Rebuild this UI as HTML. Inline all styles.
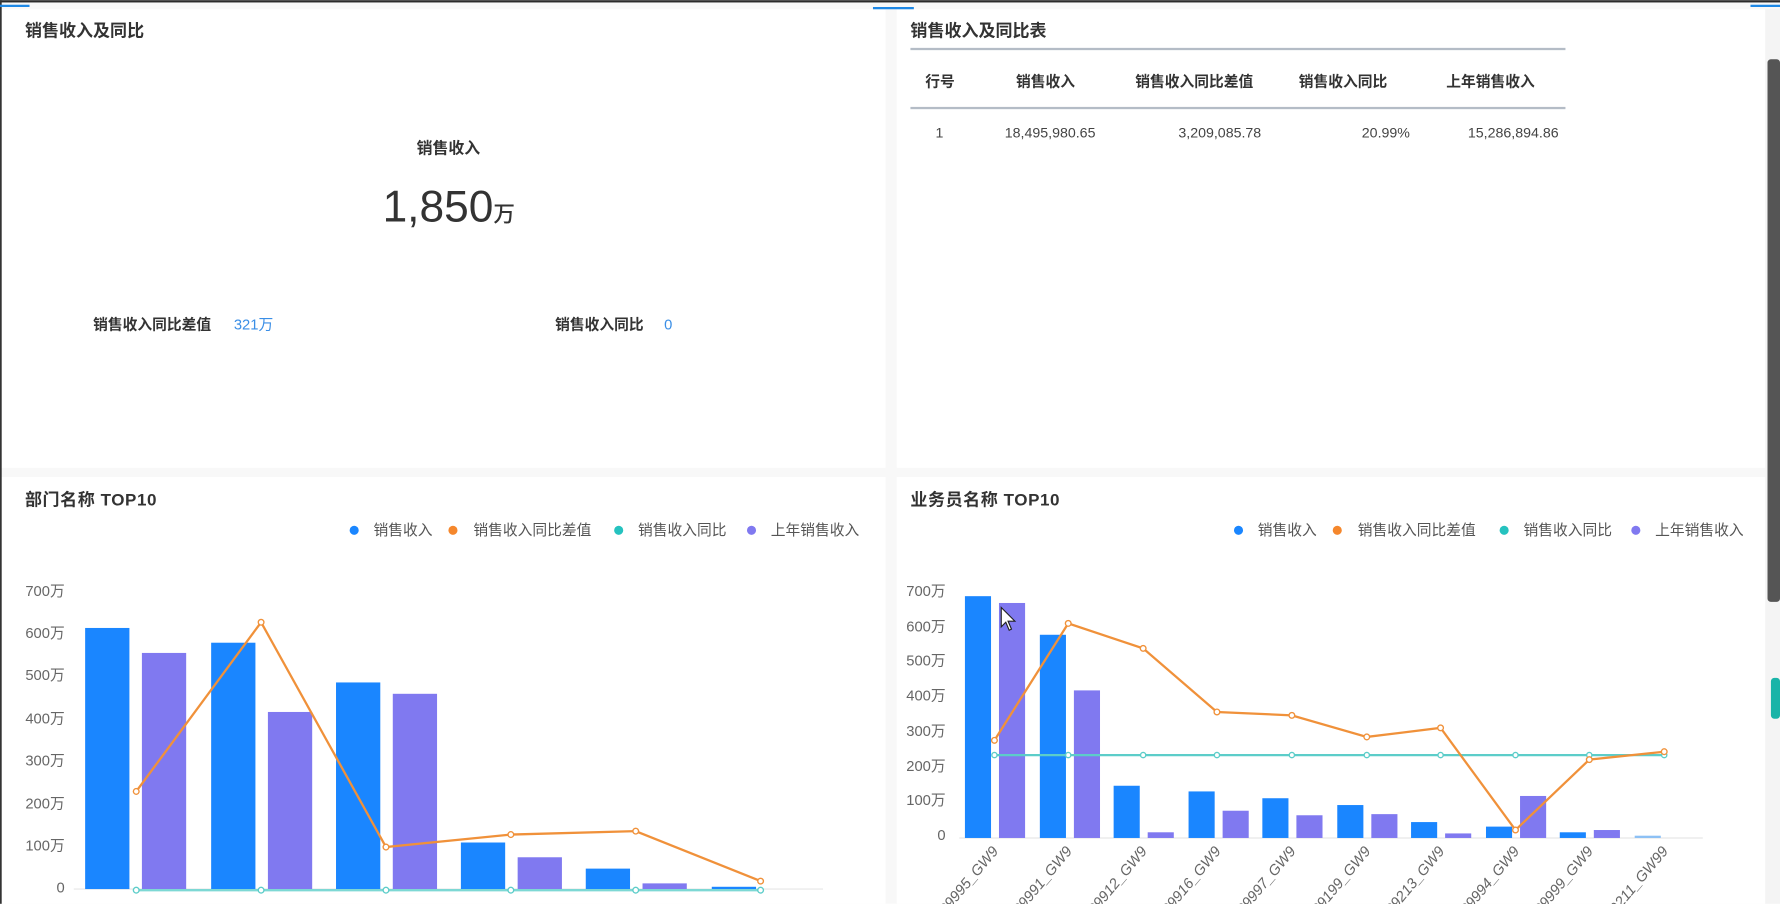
<!DOCTYPE html>
<html><head><meta charset="utf-8"><style>
html,body{margin:0;padding:0;background:#fff;overflow:hidden}
svg{display:block}
text{font-family:"Liberation Sans","Noto Sans CJK SC",sans-serif}
</style></head><body>
<svg width="1780" height="904" viewBox="0 0 1568 796" xmlns="http://www.w3.org/2000/svg">
<rect width="1568" height="796" fill="#f8f8f8"/>
<rect x="0" y="0" width="1568" height="2" fill="#2a2a2a"/>
<!-- panels -->
<rect x="1" y="8" width="779" height="404" fill="#fff"/>
<rect x="790" y="8" width="765" height="404" fill="#fff"/>
<rect x="1" y="420" width="779" height="376" fill="#fff"/>
<rect x="790" y="420" width="765" height="376" fill="#fff"/>
<rect x="0" y="0" width="1.5" height="796" fill="#333"/>
<rect x="0" y="4" width="26" height="2" fill="#1e88e5"/>
<rect x="769" y="6" width="36" height="2" fill="#1e88e5"/>
<rect x="1542" y="4" width="26" height="2" fill="#1e88e5"/>
<!-- scrollbar -->
<rect x="1555" y="8" width="13" height="788" fill="#f4f4f4"/>
<rect x="1557" y="52" width="11" height="478" rx="3" fill="#555"/>
<rect x="1560" y="597" width="8" height="36" rx="3" fill="#19b4a8"/>

<!-- Panel 1 -->
<text x="22" y="32" font-size="15" font-weight="bold" fill="#333">销售收入及同比</text>
<text x="395" y="135" font-size="14" font-weight="bold" fill="#333" text-anchor="middle">销售收入</text>
<text x="337" y="195" font-size="39" fill="#333" font-weight="500">1,850<tspan font-size="19">万</tspan></text>
<text x="82" y="290" font-size="13" font-weight="bold" fill="#333">销售收入同比差值</text>
<text x="206" y="290" font-size="13" fill="#3a8ee6">321万</text>
<text x="489" y="290" font-size="13" font-weight="bold" fill="#333">销售收入同比</text>
<text x="585" y="290" font-size="13" fill="#3a8ee6">0</text>

<!-- Panel 2 table -->
<text x="802" y="32" font-size="15" font-weight="bold" fill="#333">销售收入及同比表</text>
<rect x="802" y="42" width="577" height="2" fill="#b4bcc6"/>
<rect x="802" y="94" width="577" height="2" fill="#b4bcc6"/>
<g font-size="13" font-weight="bold" fill="#333" text-anchor="middle">
<text x="828" y="76">行号</text><text x="921" y="76">销售收入</text><text x="1052" y="76">销售收入同比差值</text><text x="1183" y="76">销售收入同比</text><text x="1313" y="76">上年销售收入</text>
</g>
<g font-size="12.5" fill="#444" text-anchor="end">
<text x="831" y="121">1</text><text x="965" y="121">18,495,980.65</text><text x="1111" y="121">3,209,085.78</text><text x="1242" y="121">20.99%</text><text x="1373" y="121">15,286,894.86</text>
</g>

<!-- Chart 3 -->
<text x="22" y="445" font-size="15" font-weight="bold" fill="#333" letter-spacing="0.5">部门名称 TOP10</text>
<g font-size="13" fill="#555">
<circle cx="312" cy="467" r="4" fill="#1a86ff"/><text x="329" y="471">销售收入</text>
<circle cx="399" cy="467" r="4" fill="#f5872c"/><text x="417" y="471">销售收入同比差值</text>
<circle cx="545" cy="467" r="4" fill="#25c2bf"/><text x="562" y="471">销售收入同比</text>
<circle cx="662" cy="467" r="4" fill="#8079f0"/><text x="679" y="471">上年销售收入</text>
</g>
<g font-size="13" fill="#666" text-anchor="end">
<text x="57" y="525">700万</text><text x="57" y="562">600万</text><text x="57" y="599">500万</text><text x="57" y="637">400万</text><text x="57" y="674">300万</text><text x="57" y="712">200万</text><text x="57" y="749">100万</text><text x="57" y="786">0</text>
</g>
<line x1="65" y1="783" x2="725" y2="783" stroke="#eee" stroke-width="1.5"/>
<g fill="#1a86ff">
<rect x="75" y="553" width="39" height="230"/><rect x="186" y="566" width="39" height="217"/><rect x="296" y="601" width="39" height="182"/><rect x="406" y="742" width="39" height="41"/><rect x="516" y="765" width="39" height="18"/><rect x="627" y="781" width="39" height="2"/>
</g>
<g fill="#8079f0">
<rect x="125" y="575" width="39" height="208"/><rect x="236" y="627" width="39" height="156"/><rect x="346" y="611" width="39" height="172"/><rect x="456" y="755" width="39" height="28"/><rect x="566" y="778" width="39" height="5"/>
</g>
<polyline points="120,697 230,548 340,746 450,735 560,732 670,776" fill="none" stroke="#f0913a" stroke-width="2"/>
<g fill="#fff" stroke="#f0913a" stroke-width="1.2"><circle cx="120" cy="697" r="2.5"/><circle cx="230" cy="548" r="2.5"/><circle cx="340" cy="746" r="2.5"/><circle cx="450" cy="735" r="2.5"/><circle cx="560" cy="732" r="2.5"/><circle cx="670" cy="776" r="2.5"/></g>
<line x1="120" y1="784" x2="670" y2="784" stroke="#7dd8d4" stroke-width="2"/>
<g fill="#fff" stroke="#5ccdc9" stroke-width="1.2"><circle cx="120" cy="784" r="2.5"/><circle cx="230" cy="784" r="2.5"/><circle cx="340" cy="784" r="2.5"/><circle cx="450" cy="784" r="2.5"/><circle cx="560" cy="784" r="2.5"/><circle cx="670" cy="784" r="2.5"/></g>

<!-- Chart 4 -->
<text x="802" y="445" font-size="15" font-weight="bold" fill="#333" letter-spacing="0.5">业务员名称 TOP10</text>
<g font-size="13" fill="#555">
<circle cx="1091" cy="467" r="4" fill="#1a86ff"/><text x="1108" y="471">销售收入</text>
<circle cx="1178" cy="467" r="4" fill="#f5872c"/><text x="1196" y="471">销售收入同比差值</text>
<circle cx="1325" cy="467" r="4" fill="#25c2bf"/><text x="1342" y="471">销售收入同比</text>
<circle cx="1441" cy="467" r="4" fill="#8079f0"/><text x="1458" y="471">上年销售收入</text>
</g>
<g font-size="13" fill="#666" text-anchor="end">
<text x="833" y="525">700万</text><text x="833" y="556">600万</text><text x="833" y="586">500万</text><text x="833" y="617">400万</text><text x="833" y="648">300万</text><text x="833" y="679">200万</text><text x="833" y="709">100万</text><text x="833" y="740">0</text>
</g>
<line x1="845" y1="738" x2="1500" y2="738" stroke="#eee" stroke-width="1.5"/>
<g fill="#1a86ff">
<rect x="850" y="525" width="23" height="213"/><rect x="916" y="559" width="23" height="179"/><rect x="981" y="692" width="23" height="46"/><rect x="1047" y="697" width="23" height="41"/><rect x="1112" y="703" width="23" height="35"/><rect x="1178" y="709" width="23" height="29"/><rect x="1243" y="724" width="23" height="14"/><rect x="1309" y="728" width="23" height="10"/><rect x="1374" y="733" width="23" height="5"/><rect x="1440" y="736" width="23" height="2" fill="#8cc0f5"/>
</g>
<g fill="#8079f0">
<rect x="880" y="531" width="23" height="207"/><rect x="946" y="608" width="23" height="130"/><rect x="1011" y="733" width="23" height="5"/><rect x="1077" y="714" width="23" height="24"/><rect x="1142" y="718" width="23" height="20"/><rect x="1208" y="717" width="23" height="21"/><rect x="1273" y="734" width="23" height="4"/><rect x="1339" y="701" width="23" height="37"/><rect x="1404" y="731" width="23" height="7"/>
</g>
<line x1="876" y1="665" x2="1466" y2="665" stroke="#5ccdc9" stroke-width="2"/>
<g fill="#fff" stroke="#5ccdc9" stroke-width="1.2"><circle cx="876" cy="665" r="2.3"/><circle cx="941" cy="665" r="2.3"/><circle cx="1007" cy="665" r="2.3"/><circle cx="1072" cy="665" r="2.3"/><circle cx="1138" cy="665" r="2.3"/><circle cx="1204" cy="665" r="2.3"/><circle cx="1269" cy="665" r="2.3"/><circle cx="1335" cy="665" r="2.3"/><circle cx="1400" cy="665" r="2.3"/><circle cx="1466" cy="665" r="2.3"/></g>
<polyline points="876,652 941,549 1007,571 1072,627 1138,630 1204,649 1269,641 1335,731 1400,669 1466,662" fill="none" stroke="#f0913a" stroke-width="2"/>
<g fill="#fff" stroke="#f0913a" stroke-width="1.2"><circle cx="876" cy="652" r="2.5"/><circle cx="941" cy="549" r="2.5"/><circle cx="1007" cy="571" r="2.5"/><circle cx="1072" cy="627" r="2.5"/><circle cx="1138" cy="630" r="2.5"/><circle cx="1204" cy="649" r="2.5"/><circle cx="1269" cy="641" r="2.5"/><circle cx="1335" cy="731" r="2.5"/><circle cx="1400" cy="669" r="2.5"/><circle cx="1466" cy="662" r="2.5"/></g>
<g font-size="13" fill="#666" font-style="italic" text-anchor="end">
<text transform="translate(880,750) rotate(-50)">TC9995_GW9</text>
<text transform="translate(945,750) rotate(-50)">TC9991_GW9</text>
<text transform="translate(1011,750) rotate(-50)">TC9912_GW9</text>
<text transform="translate(1076,750) rotate(-50)">TC9916_GW9</text>
<text transform="translate(1142,750) rotate(-50)">TC9997_GW9</text>
<text transform="translate(1208,750) rotate(-50)">TC9199_GW9</text>
<text transform="translate(1273,750) rotate(-50)">TC9213_GW9</text>
<text transform="translate(1339,750) rotate(-50)">TC9994_GW9</text>
<text transform="translate(1404,750) rotate(-50)">TC9999_GW9</text>
<text transform="translate(1470,750) rotate(-50)">TC9211_GW99</text>
</g>
<!-- cursor -->
<path d="M882,535 L882,552 L886,548 L889,555 L891,554 L888,547 L894,547 Z" fill="#fff" stroke="#222" stroke-width="1"/>
</svg>
</body></html>
